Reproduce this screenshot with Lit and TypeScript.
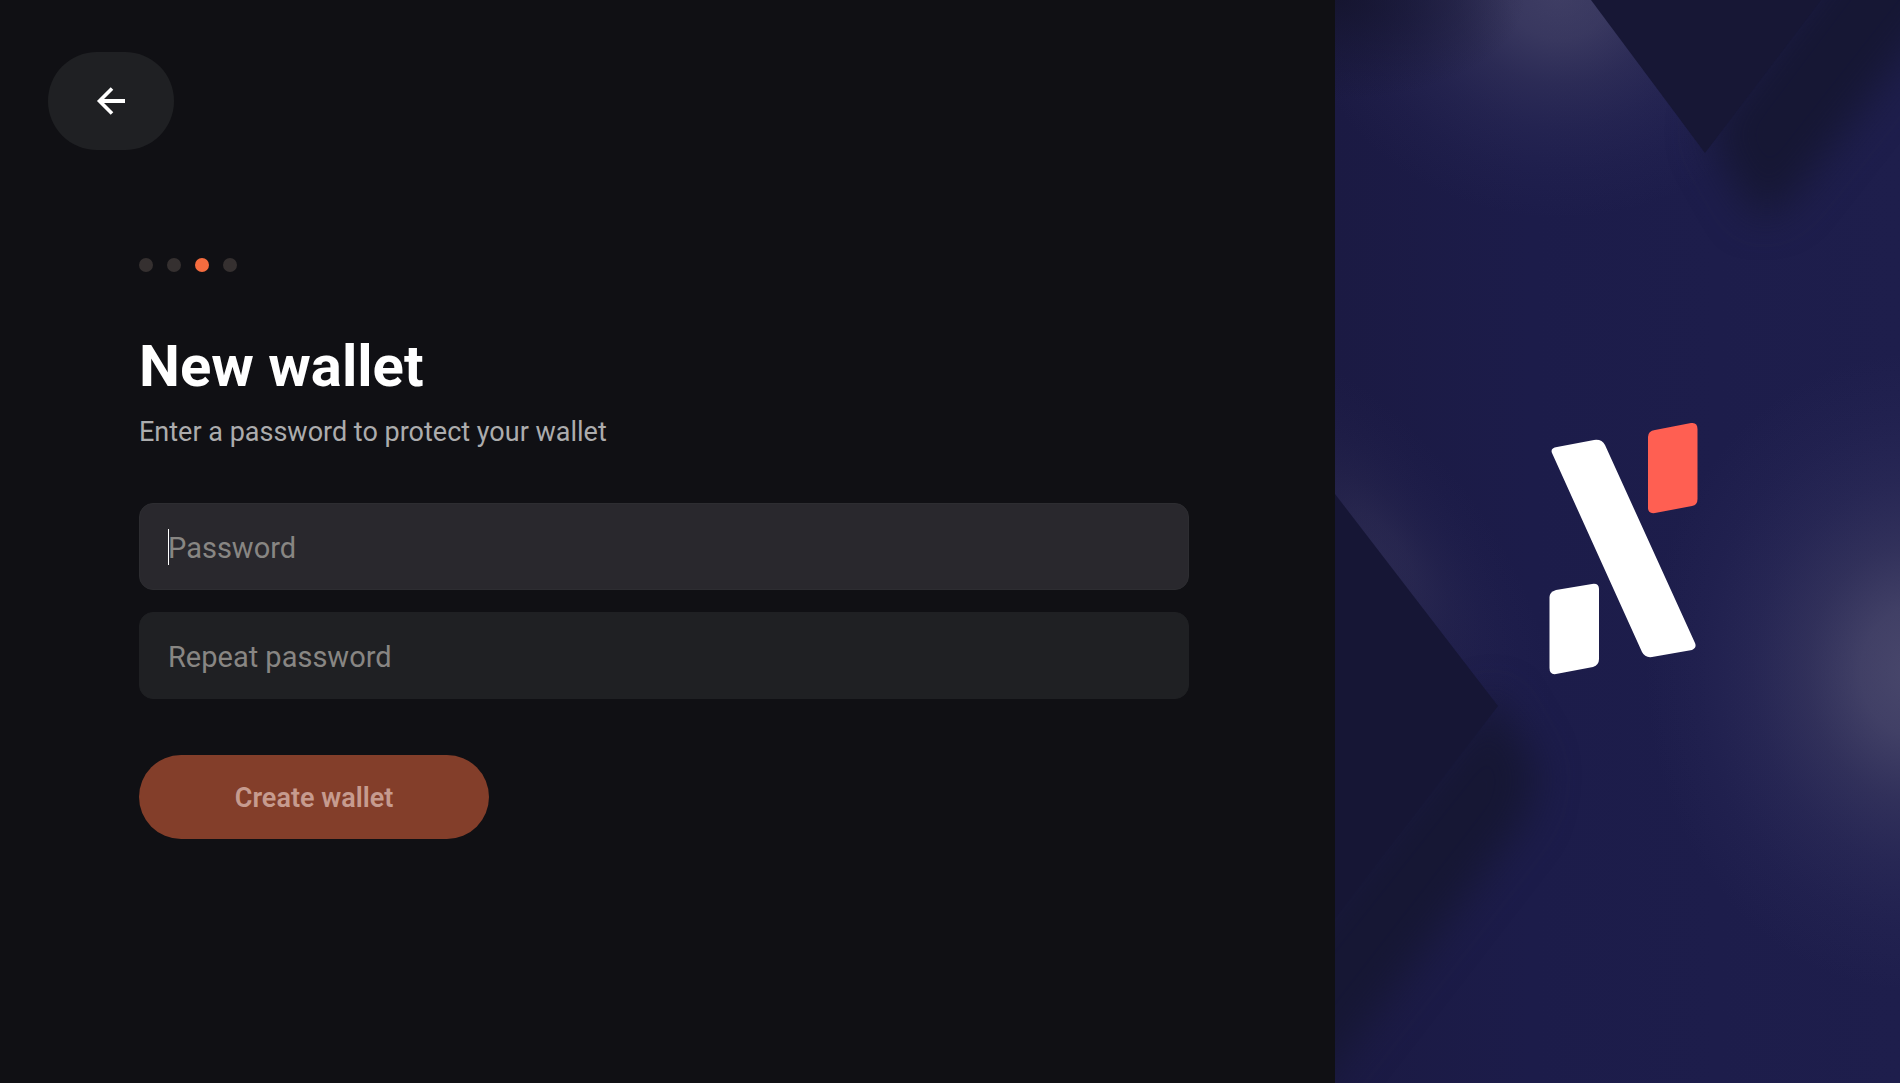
import { LitElement, html, css } from "lit";
import { customElement, state } from "lit/decorators.js";

@customElement("brand-artwork")
export class BrandArtwork extends LitElement {
  static styles = css`
    :host {
      display: block;
      position: relative;
      overflow: hidden;
      background: #1d1d4b;
    }
    .art {
      position: absolute;
      inset: 0;
      width: 100%;
      height: 100%;
    }
  `;

  render() {
    return html`
      <svg class="art" viewBox="0 0 565 1083" preserveAspectRatio="xMidYMid slice" aria-hidden="true">
        <defs>
          <linearGradient id="base" x1="0" y1="0" x2="1" y2="0">
            <stop offset="0" stop-color="#1b1a43" />
            <stop offset="0.35" stop-color="#1c1c4a" />
            <stop offset="1" stop-color="#1e1e4c" />
          </linearGradient>
          <radialGradient id="glow">
            <stop offset="0" stop-color="#7a7790" stop-opacity="0.46" />
            <stop offset="0.2" stop-color="#7a7790" stop-opacity="0.38" />
            <stop offset="0.4" stop-color="#75728e" stop-opacity="0.22" />
            <stop offset="0.6" stop-color="#6a6890" stop-opacity="0.12" />
            <stop offset="0.8" stop-color="#605e90" stop-opacity="0.05" />
            <stop offset="1" stop-color="#605e90" stop-opacity="0" />
          </radialGradient>
          <radialGradient id="corner">
            <stop offset="0" stop-color="#14142c" stop-opacity="0.85" />
            <stop offset="0.5" stop-color="#14142c" stop-opacity="0.4" />
            <stop offset="1" stop-color="#14142c" stop-opacity="0" />
          </radialGradient>
          <filter id="soft" x="-50%" y="-50%" width="200%" height="200%" color-interpolation-filters="sRGB">
            <feGaussianBlur stdDeviation="20" />
          </filter>
        </defs>
        <rect width="565" height="1083" fill="url(#base)" />
        <ellipse cx="225" cy="-6" rx="260" ry="225" fill="url(#glow)" opacity="0.8" />
        <ellipse cx="0" cy="0" rx="190" ry="100" fill="url(#corner)" />
        <ellipse cx="580" cy="672" rx="270" ry="320" fill="url(#glow)" />
        <ellipse cx="45" cy="555" rx="250" ry="110" fill="url(#glow)" opacity="0.32" transform="rotate(53 45 555)" />
        <path d="M372 130L398 178L422 218L450 205L670 -75L530 -80Z" fill="#161734" filter="url(#soft)" />
        <path d="M158 694L184 738L202 770L192 815L-40 1115L-100 1100L-100 1020Z" fill="#161734" filter="url(#soft)" />
        <path d="M256 0L370 153L486 0Z" fill="#171735" />
        <path d="M0 494L163 706L0 918Z" fill="#161635" />
        <path
          d="M222 447L259 440Q267 439 270 445L360 643Q362 648 357 650L317 657Q310 658 307 652L217 453Q215 448 222 447Z"
          fill="#fff"
        />
        <path
          d="M214.500 597Q214.500 592 221 590L257 584Q264 583 264 589V659Q264 665 258 667L221 674Q214.500 675 214.500 668Z"
          fill="#fff"
        />
        <path
          d="M313 437Q313 431 320 430L356 423Q362.500 422 362.500 429V499Q362.500 505 357 506L320 513Q313 514 313 508Z"
          fill="#ff5f52"
        />
      </svg>
    `;
  }
}

@customElement("app-root")
export class AppRoot extends LitElement {
  @state() private password = "";
  @state() private repeated = "";

  private readonly steps = 4;
  private readonly currentStep = 2;

  static styles = css`
    :host {
      display: grid;
      grid-template-columns: minmax(0, 1335fr) minmax(0, 565fr);
      min-height: 100vh;
      background: #101014;
      color: #fff;
      font-family: Roboto, "Liberation Sans", sans-serif;
    }
    .panel {
      display: flex;
      flex-direction: column;
      align-items: flex-start;
      gap: 108px;
      padding: 52px 146px 52px 48px;
    }
    .back {
      display: flex;
      align-items: center;
      justify-content: center;
      width: 126px;
      height: 98px;
      padding: 0;
      border: 0;
      border-radius: 49px;
      background: #1f2023;
      color: #fff;
      cursor: pointer;
    }
    .form {
      display: flex;
      flex-direction: column;
      align-self: stretch;
      padding-left: 91px;
    }
    .dots {
      display: flex;
      gap: 14px;
      margin: 0 0 58px;
      padding: 0;
      list-style: none;
    }
    .dot {
      width: 14px;
      height: 14px;
      border-radius: 50%;
      background: #353030;
    }
    .dot.current {
      background: #f56c3f;
    }
    .title {
      margin: 0 0 12px;
      font-size: 58px;
      line-height: 72px;
      font-weight: 700;
    }
    .subtitle {
      margin: 0;
      font-size: 27px;
      line-height: 36px;
      font-weight: 400;
      color: #acacad;
    }
    .fields {
      display: flex;
      flex-direction: column;
      gap: 22px;
      margin: 53px 0 56px;
    }
    .field {
      position: relative;
      display: block;
    }
    .input {
      box-sizing: border-box;
      display: block;
      width: 100%;
      height: 87px;
      padding: 2px 28px 0;
      border: 1px solid #1f2023;
      border-radius: 14px;
      outline: none;
      background: #1f2023;
      color: #fff;
      font: 400 29px/36px Roboto, "Liberation Sans", sans-serif;
    }
    .input::placeholder {
      color: #888683;
      opacity: 1;
    }
    .active .input {
      border-color: #2d2d31;
      background: #29282d;
      caret-color: transparent;
    }
    .caret {
      position: absolute;
      left: 29px;
      top: 26px;
      width: 1px;
      height: 36px;
      background: #fff;
    }
    .submit {
      align-self: flex-start;
      width: 350px;
      height: 84px;
      padding: 2px 28px 0;
      border: 0;
      border-radius: 42px;
      background: #833e2a;
      color: #c69b8f;
      font: 600 27px/36px Roboto, "Liberation Sans", sans-serif;
    }
  `;

  render() {
    return html`
      <main class="panel">
        <button class="back" type="button" aria-label="Back">
          <svg width="30" height="30" viewBox="0 0 30 30" fill="none" stroke="currentColor" aria-hidden="true">
            <path d="M16 2.500L3.500 15L16 27.500" stroke-width="3.600" />
            <path d="M3.500 15H29" stroke-width="4" />
          </svg>
        </button>
        <form class="form" @submit=${(e: Event) => e.preventDefault()}>
          <ol class="dots" aria-label="Progress">
            ${Array.from(
              { length: this.steps },
              (_, i) => html`<li class=${i === this.currentStep ? "dot current" : "dot"}></li>`
            )}
          </ol>
          <h1 class="title">New wallet</h1>
          <p class="subtitle">Enter a password to protect your wallet</p>
          <div class="fields">
            <label class="field active">
              <input
                class="input"
                type="password"
                placeholder="Password"
                aria-label="Password"
                .value=${this.password}
                @input=${(e: Event) => (this.password = (e.target as HTMLInputElement).value)}
              />
              ${this.password ? "" : html`<span class="caret"></span>`}
            </label>
            <label class="field">
              <input
                class="input"
                type="password"
                placeholder="Repeat password"
                aria-label="Repeat password"
                .value=${this.repeated}
                @input=${(e: Event) => (this.repeated = (e.target as HTMLInputElement).value)}
              />
            </label>
          </div>
          <button class="submit" type="submit" ?disabled=${!this.password || this.password !== this.repeated}>
            Create wallet
          </button>
        </form>
      </main>
      <brand-artwork></brand-artwork>
    `;
  }
}
